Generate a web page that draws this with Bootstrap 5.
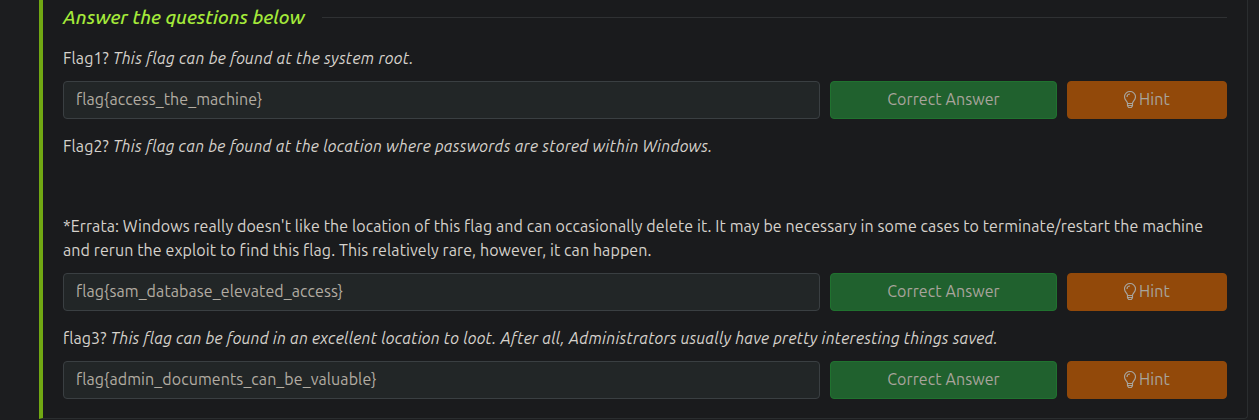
<!DOCTYPE html>
<html lang="en" data-bs-theme="dark">
<head>
<meta charset="utf-8">
<meta name="viewport" content="width=device-width, initial-scale=1">
<title>Task questions</title>
<link href="https://cdn.jsdelivr.net/npm/bootstrap@5.3.0/dist/css/bootstrap.min.css" rel="stylesheet">
<style>
  body { background: #1c1d1f; color: #d6d2cc; font: 16px/24px "Ubuntu", "Noto Sans", sans-serif; letter-spacing: .093px; overflow: hidden; }
  .task-card { height: 419px; margin: 0 11px 0 39px; padding: 5px 20px 0; background: #1a1b1d; border: 0 solid #2a2d2f; border-width: 0 1px 1px 0; border-left: 4px solid #71a813; border-radius: 0 0 4px 0; }
  .task-title { font-size: 19.2px; line-height: 24px; font-weight: 500; font-style: italic; letter-spacing: 0; color: #a5ea3a; margin: 0; white-space: nowrap; }
  .task-rule { height: 1px; background: #2f3133; margin-left: 17px; }
  .task-head { margin-bottom: 17px; }
  .question p { margin: 0 0 11px; }
  .question em { letter-spacing: .29px; }
  .question-2 em { letter-spacing: .26px; }
  .question-3 em { letter-spacing: .23px; }
  .question + .question { margin-top: 15px; }
  .question p.errata { padding-top: 45px; }
  .answers { gap: 10px; }
  .answers .form-control, .answers .btn { height: 38px; font-size: 16px; line-height: 24px; letter-spacing: .093px; border-radius: 4px; padding: 5px 12px 7px; }
  .answers .form-control { background: #222627; border-color: #3a3f42; color: #b2aca2; opacity: 1; }
  .answers .btn { color: #a8a49c; opacity: 1; flex: none; }
  .answers .btn-correct { width: 227px; background: #20612e; border-color: #20722f; }
  .answers .btn-hint { width: 160px; background: #92490a; border-color: #92490a; }
  .bulb { width: 12px; height: 17px; flex: none; margin-right: 3px; }
</style>
</head>
<body>
<svg class="d-none"><symbol id="bulb" viewBox="0 0 12 17"><path fill="none" stroke="currentColor" stroke-width="1.15" d="M3.500 12.500c0-2.200-3-3.300-3-6.700a5.500 5.300 0 0 1 11 0c0 3.400-3 4.500-3 6.700zM3.500 12.500v2.300l1.200 1.700h2.600l1.200-1.700v-2.300M3.500 14.500h5M3 6a3 3 0 0 1 3-3"/></symbol></svg>
<main class="task-card">
  <header class="task-head d-flex align-items-center">
    <h5 class="task-title">Answer the questions below</h5>
    <div class="task-rule flex-grow-1"></div>
  </header>

  <section class="question">
    <p>Flag1? <em>This flag can be found at the system root.</em></p>
    <div class="answers d-flex">
      <input class="form-control" value="flag{access_the_machine}" disabled aria-label="Flag 1">
      <button class="btn btn-correct" disabled>Correct Answer</button>
      <button class="btn btn-hint d-flex align-items-center justify-content-center"><svg class="bulb"><use href="#bulb"/></svg>Hint</button>
    </div>
  </section>

  <section class="question question-2">
    <p>Flag2? <em>This flag can be found at the location where passwords are stored within Windows.</em></p>
    <p class="errata">*Errata: Windows really doesn't like the location of this flag and can occasionally delete it. It may be necessary in some cases to terminate/restart the machine and rerun the exploit to find this flag. This relatively rare, however, it can happen.</p>
    <div class="answers d-flex">
      <input class="form-control" value="flag{sam_database_elevated_access}" disabled aria-label="Flag 2">
      <button class="btn btn-correct" disabled>Correct Answer</button>
      <button class="btn btn-hint d-flex align-items-center justify-content-center"><svg class="bulb"><use href="#bulb"/></svg>Hint</button>
    </div>
  </section>

  <section class="question question-3">
    <p>flag3? <em>This flag can be found in an excellent location to loot. After all, Administrators usually have pretty interesting things saved.</em></p>
    <div class="answers d-flex">
      <input class="form-control" value="flag{admin_documents_can_be_valuable}" disabled aria-label="Flag 3">
      <button class="btn btn-correct" disabled>Correct Answer</button>
      <button class="btn btn-hint d-flex align-items-center justify-content-center"><svg class="bulb"><use href="#bulb"/></svg>Hint</button>
    </div>
  </section>
</main>
<script src="https://cdn.jsdelivr.net/npm/bootstrap@5.3.0/dist/js/bootstrap.bundle.min.js"></script>
</body>
</html>
